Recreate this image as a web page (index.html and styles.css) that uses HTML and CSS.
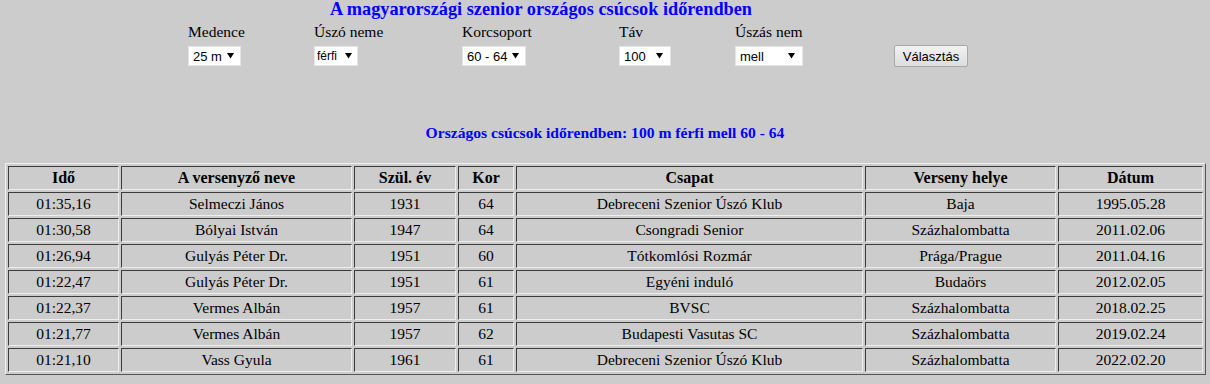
FILE: index.html
```html
<!DOCTYPE html>
<html lang="hu">
<head>
<meta charset="utf-8">
<title>Szenior országos csúcsok</title>
<link rel="stylesheet" href="styles.css">
</head>
<body>
<h1 class="title">A magyarországi szenior országos csúcsok időrendben</h1>
<form class="filters">
  <div class="field">
    <label class="label">Medence</label>
    <span class="sel w-medence"><select><option>25 m</option></select><svg class="arrow" viewBox="0 0 7 7"><path d="M0 1h7L3.5 6.5z"/></svg></span>
  </div>
  <div class="field">
    <label class="label">Úszó neme</label>
    <span class="sel w-nem"><select><option>férfi</option></select><svg class="arrow" viewBox="0 0 7 7"><path d="M0 1h7L3.5 6.5z"/></svg></span>
  </div>
  <div class="field">
    <label class="label">Korcsoport</label>
    <span class="sel w-kor"><select><option>60 - 64</option></select><svg class="arrow" viewBox="0 0 7 7"><path d="M0 1h7L3.5 6.5z"/></svg></span>
  </div>
  <div class="field">
    <label class="label">Táv</label>
    <span class="sel w-tav"><select><option>100</option></select><svg class="arrow" viewBox="0 0 7 7"><path d="M0 1h7L3.5 6.5z"/></svg></span>
  </div>
  <div class="field">
    <label class="label">Úszás nem</label>
    <span class="sel w-uszas"><select><option>mell</option></select><svg class="arrow" viewBox="0 0 7 7"><path d="M0 1h7L3.5 6.5z"/></svg></span>
  </div>
  <div class="field field-btn">
    <button type="button" class="btn">Választás</button>
  </div>
</form>
<h2 class="subtitle">Országos csúcsok időrendben: 100 m férfi mell 60 - 64</h2>
<table class="records">
  <colgroup>
    <col class="c1"><col class="c2"><col class="c3"><col class="c4"><col class="c5"><col class="c6"><col class="c7">
  </colgroup>
  <thead>
    <tr><th>Idő</th><th>A versenyző neve</th><th>Szül. év</th><th>Kor</th><th>Csapat</th><th>Verseny helye</th><th>Dátum</th></tr>
  </thead>
  <tbody>
    <tr><td>01:35,16</td><td>Selmeczi János</td><td>1931</td><td>64</td><td>Debreceni Szenior Úszó Klub</td><td>Baja</td><td>1995.05.28</td></tr>
    <tr><td>01:30,58</td><td>Bólyai István</td><td>1947</td><td>64</td><td>Csongradi Senior</td><td>Százhalombatta</td><td>2011.02.06</td></tr>
    <tr><td>01:26,94</td><td>Gulyás Péter Dr.</td><td>1951</td><td>60</td><td>Tótkomlósi Rozmár</td><td>Prága/Prague</td><td>2011.04.16</td></tr>
    <tr><td>01:22,47</td><td>Gulyás Péter Dr.</td><td>1951</td><td>61</td><td>Egyéni induló</td><td>Budaörs</td><td>2012.02.05</td></tr>
    <tr><td>01:22,37</td><td>Vermes Albán</td><td>1957</td><td>61</td><td>BVSC</td><td>Százhalombatta</td><td>2018.02.25</td></tr>
    <tr><td>01:21,77</td><td>Vermes Albán</td><td>1957</td><td>62</td><td>Budapesti Vasutas SC</td><td>Százhalombatta</td><td>2019.02.24</td></tr>
    <tr><td>01:21,10</td><td>Vass Gyula</td><td>1961</td><td>61</td><td>Debreceni Szenior Úszó Klub</td><td>Százhalombatta</td><td>2022.02.20</td></tr>
  </tbody>
</table>
</body>
</html>
```
FILE: styles.css
```css
html, body {
  margin: 0;
  padding: 0;
  background: #cccccc;
}
body {
  font-family: "Liberation Serif", "Times New Roman", serif;
  font-size: 16px;
  color: #000;
}
.title {
  margin: 0;
  padding-left: 330px;
  font-size: 18.3px;
  line-height: 19px;
  font-weight: bold;
  color: #0000ff;
}
.filters {
  display: grid;
  grid-template-columns: 126px 148px 157px 116px 159px auto;
  padding-left: 188px;
  margin-top: 4px;
}
.field {
  display: flex;
  flex-direction: column;
  align-items: flex-start;
  gap: 5px;
}
.label {
  font-size: 15.5px;
  line-height: 18px;
}
.sel {
  position: relative;
  display: inline-block;
  height: 20px;
}
.sel select {
  appearance: none;
  -webkit-appearance: none;
  margin: 0;
  width: 100%;
  height: 20px;
  box-sizing: border-box;
  border: 1px solid #e4e4e4;
  border-radius: 0;
  background: #fff;
  padding: 0 0 0 4px;
  font-family: "Liberation Sans", Arial, sans-serif;
  font-size: 13px;
  color: #000;
}
.sel .arrow {
  position: absolute;
  right: 7px;
  top: 6px;
  width: 7px;
  height: 7px;
  fill: #000;
  pointer-events: none;
}
.w-medence { width: 53px; }
.w-nem { width: 44px; }
.w-nem select { padding-left: 2px; font-size: 12px; }
.w-nem .arrow { right: 6px; }
.w-kor { width: 64px; }
.w-tav { width: 52px; }
.w-tav .arrow { right: 8px; }
.w-uszas { width: 68px; }
.w-uszas .arrow { right: 8px; }
.field-btn {
  justify-content: flex-end;
}
.btn {
  margin: 0 0 -1px 0;
  height: 22px;
  width: 74px;
  padding: 0;
  border: 1px solid #a8a8a8;
  border-radius: 2px;
  background: linear-gradient(#f2f2f2, #dddddd);
  font-family: "Liberation Sans", Arial, sans-serif;
  font-size: 13px;
  color: #000;
}
.subtitle {
  margin: 58px 0 0 0;
  text-align: center;
  font-size: 15.6px;
  line-height: 18px;
  font-weight: bold;
  color: #0000ff;
}
.records {
  margin: 21px 0 0 5px;
  width: 1201px;
  table-layout: fixed;
  border-collapse: separate;
  border-spacing: 2px;
  border: 1px solid;
  border-color: #f0f0f0 #555555 #555555 #f0f0f0;
}
.c1 { width: 111px; }
.c2 { width: 231px; }
.c3 { width: 102px; }
.c4 { width: 56px; }
.c5 { width: 347px; }
.c6 { width: 191px; }
.c7 { width: 145px; }
.records th,
.records td {
  box-sizing: border-box;
  height: 24px;
  padding: 2px 1px;
  line-height: 18px;
  text-align: center;
  border: 1px solid;
  border-color: #3c3c3c #eeeeee #eeeeee #3c3c3c;
  font-size: 15.5px;
  white-space: nowrap;
}
.records th {
  font-weight: bold;
  font-size: 16px;
}
```
